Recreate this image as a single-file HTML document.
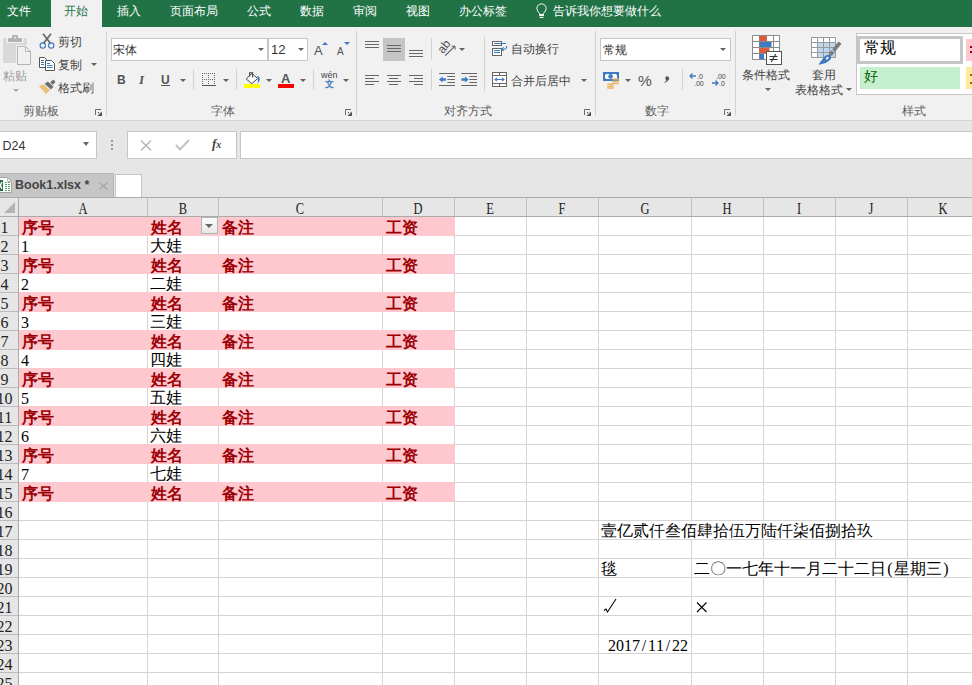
<!DOCTYPE html><html><head><meta charset="utf-8"><style>
*{box-sizing:border-box;margin:0;padding:0}
html,body{width:972px;height:685px;overflow:hidden;background:#fff;font-family:"Liberation Sans",sans-serif}
.a{position:absolute}
.t{position:absolute;white-space:nowrap;line-height:1}
.sep{position:absolute;width:1px;background:#d2d2d2}
.dd{position:absolute;width:0;height:0;border-left:3px solid transparent;border-right:3px solid transparent;border-top:3.5px solid #616161}
.rt{color:#444;font-size:12px}
.k{display:inline-block;width:1em;font-style:normal;text-align:center;font-family:"Liberation Sans",sans-serif}
.cell{position:absolute;white-space:nowrap;line-height:1;font-size:16px;font-family:"Liberation Serif",serif}
</style></head><body>
<div class="a" style="left:0;top:0;width:972px;height:27px;background:#217346"></div>
<div class="a" style="left:51px;top:0;width:51px;height:27px;background:#f1f1f1"></div>
<div class="t" style="left:7px;top:5px;font-size:12px;color:#fff"><i class="k">文</i><i class="k">件</i></div>
<div class="t" style="left:64px;top:5px;font-size:12px;color:#217346"><i class="k">开</i><i class="k">始</i></div>
<div class="t" style="left:117px;top:5px;font-size:12px;color:#fff"><i class="k">插</i><i class="k">入</i></div>
<div class="t" style="left:170px;top:5px;font-size:12px;color:#fff"><i class="k">页</i><i class="k">面</i><i class="k">布</i><i class="k">局</i></div>
<div class="t" style="left:247px;top:5px;font-size:12px;color:#fff"><i class="k">公</i><i class="k">式</i></div>
<div class="t" style="left:300px;top:5px;font-size:12px;color:#fff"><i class="k">数</i><i class="k">据</i></div>
<div class="t" style="left:353px;top:5px;font-size:12px;color:#fff"><i class="k">审</i><i class="k">阅</i></div>
<div class="t" style="left:406px;top:5px;font-size:12px;color:#fff"><i class="k">视</i><i class="k">图</i></div>
<div class="t" style="left:459px;top:5px;font-size:12px;color:#fff"><i class="k">办</i><i class="k">公</i><i class="k">标</i><i class="k">签</i></div>
<div class="t" style="left:553px;top:5px;font-size:12px;color:#fff"><i class="k">告</i><i class="k">诉</i><i class="k">我</i><i class="k">你</i><i class="k">想</i><i class="k">要</i><i class="k">做</i><i class="k">什</i><i class="k">么</i></div>
<div class="a" style="left:0;top:27px;width:972px;height:93px;background:#f1f1f1"></div>
<div class="a" style="left:0;top:120px;width:972px;height:1px;background:#d4d4d4"></div>
<div class="sep" style="left:106px;top:31px;height:85px"></div>
<div class="sep" style="left:356px;top:31px;height:85px"></div>
<div class="sep" style="left:595px;top:31px;height:85px"></div>
<div class="sep" style="left:735px;top:31px;height:85px"></div>
<div class="t rt" style="left:23px;top:105px;color:#5e5e5e"><i class="k">剪</i><i class="k">贴</i><i class="k">板</i></div>
<div class="t rt" style="left:211px;top:105px;color:#5e5e5e"><i class="k">字</i><i class="k">体</i></div>
<div class="t rt" style="left:444px;top:105px;color:#5e5e5e"><i class="k">对</i><i class="k">齐</i><i class="k">方</i><i class="k">式</i></div>
<div class="t rt" style="left:645px;top:105px;color:#5e5e5e"><i class="k">数</i><i class="k">字</i></div>
<div class="t rt" style="left:902px;top:105px;color:#5e5e5e"><i class="k">样</i><i class="k">式</i></div>
<svg class="a" style="left:95px;top:109px" width="8" height="8" viewBox="0 0 8 8"><path d="M0.5 6V0.5H6" fill="none" stroke="#6a6a6a" stroke-width="1"/><path d="M7 2.4V7H2.4Z" fill="#555"/><rect x="3" y="3" width="1.2" height="1.2" fill="#555"/></svg>
<svg class="a" style="left:345px;top:109px" width="8" height="8" viewBox="0 0 8 8"><path d="M0.5 6V0.5H6" fill="none" stroke="#6a6a6a" stroke-width="1"/><path d="M7 2.4V7H2.4Z" fill="#555"/><rect x="3" y="3" width="1.2" height="1.2" fill="#555"/></svg>
<svg class="a" style="left:584px;top:109px" width="8" height="8" viewBox="0 0 8 8"><path d="M0.5 6V0.5H6" fill="none" stroke="#6a6a6a" stroke-width="1"/><path d="M7 2.4V7H2.4Z" fill="#555"/><rect x="3" y="3" width="1.2" height="1.2" fill="#555"/></svg>
<svg class="a" style="left:724px;top:109px" width="8" height="8" viewBox="0 0 8 8"><path d="M0.5 6V0.5H6" fill="none" stroke="#6a6a6a" stroke-width="1"/><path d="M7 2.4V7H2.4Z" fill="#555"/><rect x="3" y="3" width="1.2" height="1.2" fill="#555"/></svg>
<svg class="a" style="left:0;top:30px" width="36" height="40" viewBox="0 0 36 40"><rect x="3" y="8" width="24" height="25" rx="1" fill="#d9d9d9"/><rect x="6.5" y="6.5" width="17" height="6.5" fill="#f1f1f1"/><rect x="8" y="8" width="14" height="4" rx="0.5" fill="#b3b3b3"/><rect x="12" y="5" width="6" height="4" rx="1" fill="#b3b3b3"/><circle cx="15" cy="7.6" r="1" fill="#f1f1f1"/><rect x="16" y="15" width="16" height="21" fill="#f1f1f1"/><path d="M17.5 16.5H25.5L30.5 21.5V34.5H17.5Z" fill="#f1f1f1" stroke="#b4b4b4" stroke-width="1"/><path d="M25.5 16.5V21.5H30.5" fill="none" stroke="#b4b4b4" stroke-width="1"/></svg>
<div class="t" style="left:3px;top:70px;font-size:12px;color:#9d9d9d"><i class="k">粘</i><i class="k">贴</i></div>
<div class="dd" style="left:13px;top:89px;border-top-color:#a8a8a8"></div>
<div class="t rt" style="left:58px;top:36px"><i class="k">剪</i><i class="k">切</i></div>
<div class="t rt" style="left:58px;top:59px"><i class="k">复</i><i class="k">制</i></div>
<div class="dd" style="left:91px;top:63px"></div>
<div class="t rt" style="left:58px;top:82px"><i class="k">格</i><i class="k">式</i><i class="k">刷</i></div>
<div class="a" style="left:111px;top:38px;width:157px;height:23px;background:#fff;border:1px solid #c6c6c6"></div>
<div class="t" style="left:113px;top:44px;font-size:12px;color:#333"><i class="k">宋</i><i class="k">体</i></div>
<div class="dd" style="left:258px;top:48px"></div>
<div class="a" style="left:268px;top:38px;width:40px;height:23px;background:#fff;border:1px solid #c6c6c6"></div>
<div class="t" style="left:271px;top:43px;font-size:13px;color:#333">12</div>
<div class="dd" style="left:298px;top:48px"></div>
<div class="t" style="left:314px;top:44px;font-size:13px;color:#505050">A</div>
<div class="a" style="left:322px;top:42px;width:0;height:0;border-left:3px solid transparent;border-right:3px solid transparent;border-bottom:3px solid #3d7ac2"></div>
<div class="t" style="left:337px;top:47px;font-size:10px;color:#505050">A</div>
<div class="a" style="left:344px;top:42px;width:0;height:0;border-left:3px solid transparent;border-right:3px solid transparent;border-top:3px solid #3d7ac2"></div>
<div class="t" style="left:117px;top:74px;font-size:12px;font-weight:bold;color:#555">B</div>
<div class="t" style="left:139px;top:73px;font-size:13px;font-style:italic;font-weight:bold;color:#555;font-family:'Liberation Serif',serif">I</div>
<div class="t" style="left:161px;top:74px;font-size:12px;font-weight:bold;color:#555">U</div><div class="a" style="left:161px;top:85px;width:9px;height:1px;background:#555"></div>
<div class="dd" style="left:180px;top:79px"></div>
<div class="sep" style="left:193px;top:69px;height:21px"></div>
<div class="dd" style="left:223px;top:79px"></div>
<div class="sep" style="left:236px;top:69px;height:21px"></div>
<div class="dd" style="left:266px;top:79px"></div>
<div class="t" style="left:281px;top:72px;font-size:13px;font-weight:bold;color:#555">A</div>
<div class="a" style="left:278px;top:84px;width:16px;height:4px;background:#ff0000"></div>
<div class="dd" style="left:300px;top:79px"></div>
<div class="sep" style="left:313px;top:69px;height:21px"></div>
<div class="t" style="left:321px;top:71px;font-size:9px;color:#444">wén</div>
<div class="t" style="left:325px;top:80px;font-size:9px;font-weight:bold;color:#3d7ac2"><i class="k">文</i></div>
<div class="dd" style="left:343px;top:79px"></div>
<div class="a" style="left:383px;top:38px;width:22px;height:23px;background:#c5c5c5"></div>
<div class="a" style="left:365px;top:41px;width:14px;height:1px;background:#666"></div><div class="a" style="left:365px;top:44px;width:14px;height:1px;background:#666"></div><div class="a" style="left:365px;top:47px;width:14px;height:1px;background:#666"></div>
<div class="a" style="left:387px;top:45px;width:14px;height:1px;background:#666"></div><div class="a" style="left:387px;top:48px;width:14px;height:1px;background:#666"></div><div class="a" style="left:387px;top:51px;width:14px;height:1px;background:#666"></div>
<div class="a" style="left:409px;top:50px;width:14px;height:1px;background:#666"></div><div class="a" style="left:409px;top:53px;width:14px;height:1px;background:#666"></div><div class="a" style="left:409px;top:56px;width:14px;height:1px;background:#666"></div>
<div class="sep" style="left:431px;top:38px;height:22px"></div>
<div class="dd" style="left:459px;top:48px"></div>
<div class="a" style="left:365px;top:75px;width:14px;height:1px;background:#666"></div><div class="a" style="left:365px;top:78px;width:9px;height:1px;background:#666"></div><div class="a" style="left:365px;top:81px;width:14px;height:1px;background:#666"></div><div class="a" style="left:365px;top:84px;width:9px;height:1px;background:#666"></div>
<div class="a" style="left:387px;top:75px;width:14px;height:1px;background:#666"></div><div class="a" style="left:389px;top:78px;width:9px;height:1px;background:#666"></div><div class="a" style="left:387px;top:81px;width:14px;height:1px;background:#666"></div><div class="a" style="left:389px;top:84px;width:9px;height:1px;background:#666"></div>
<div class="a" style="left:409px;top:75px;width:14px;height:1px;background:#666"></div><div class="a" style="left:414px;top:78px;width:9px;height:1px;background:#666"></div><div class="a" style="left:409px;top:81px;width:14px;height:1px;background:#666"></div><div class="a" style="left:414px;top:84px;width:9px;height:1px;background:#666"></div>
<div class="sep" style="left:431px;top:69px;height:21px"></div>
<div class="sep" style="left:484px;top:37px;height:54px"></div>
<div class="t rt" style="left:511px;top:43px"><i class="k">自</i><i class="k">动</i><i class="k">换</i><i class="k">行</i></div>
<div class="t rt" style="left:511px;top:75px"><i class="k">合</i><i class="k">并</i><i class="k">后</i><i class="k">居</i><i class="k">中</i></div>
<div class="dd" style="left:581px;top:79px"></div>
<div class="a" style="left:600px;top:38px;width:131px;height:23px;background:#fff;border:1px solid #c6c6c6"></div>
<div class="t" style="left:603px;top:44px;font-size:12px;color:#333"><i class="k">常</i><i class="k">规</i></div>
<div class="dd" style="left:720px;top:48px"></div>
<div class="dd" style="left:625px;top:79px"></div>
<div class="t" style="left:638px;top:73px;font-size:15.5px;color:#555">%</div>
<div class="sep" style="left:682px;top:69px;height:21px"></div>
<svg class="a" style="left:689px;top:72px" width="16" height="15" viewBox="0 0 16 15"><path d="M1 4h6M3.5 1.5L1 4l2.5 2.5" stroke="#3d7ac2" stroke-width="1.3" fill="none"/><text x="8" y="7" font-size="7" fill="#444" font-family="Liberation Sans">.0</text><text x="5" y="14" font-size="7" fill="#444" font-family="Liberation Sans">.00</text></svg>
<svg class="a" style="left:711px;top:72px" width="16" height="15" viewBox="0 0 16 15"><text x="5" y="7" font-size="7" fill="#444" font-family="Liberation Sans">.00</text><path d="M1 11h6M4.5 8.5L7 11l-2.5 2.5" stroke="#3d7ac2" stroke-width="1.3" fill="none"/><text x="8" y="14" font-size="7" fill="#444" font-family="Liberation Sans">.0</text></svg>
<div class="t rt" style="left:742px;top:69px"><i class="k">条</i><i class="k">件</i><i class="k">格</i><i class="k">式</i></div>
<div class="dd" style="left:765px;top:88px"></div>
<div class="t rt" style="left:812px;top:69px"><i class="k">套</i><i class="k">用</i></div>
<div class="t rt" style="left:795px;top:84px"><i class="k">表</i><i class="k">格</i><i class="k">格</i><i class="k">式</i></div>
<div class="dd" style="left:846px;top:88px"></div>
<div class="a" style="left:856px;top:33px;width:120px;height:62px;background:#fff;border:1px solid #c6c6c6"></div>
<div class="a" style="left:857px;top:36px;width:106px;height:28px;background:#fff;border:3px solid #c6c6c6"></div>
<div class="t" style="left:864px;top:40px;font-size:16px;color:#000"><i class="k">常</i><i class="k">规</i></div>
<div class="a" style="left:966px;top:39px;width:10px;height:22px;background:#ffc7ce"></div>
<div class="a" style="left:860px;top:67px;width:100px;height:22px;background:#c6efce"></div>
<div class="t" style="left:864px;top:69px;font-size:14px;color:#006100"><i class="k">好</i></div>
<div class="a" style="left:966px;top:67px;width:10px;height:22px;background:#ffeb9c"></div>
<div class="a" style="left:970px;top:46px;width:2px;height:2px;background:#9c0006"></div><div class="a" style="left:970px;top:51px;width:2px;height:2px;background:#9c0006"></div>
<div class="a" style="left:970px;top:74px;width:2px;height:2px;background:#9c6500"></div><div class="a" style="left:970px;top:82px;width:2px;height:2px;background:#9c6500"></div>
<div class="a" style="left:0;top:121px;width:972px;height:49px;background:#e6e6e6"></div>
<div class="a" style="left:-2px;top:131px;width:99px;height:28px;background:#fff;border:1px solid #c6c6c6"></div>
<div class="t" style="left:2.5px;top:140px;font-size:12.5px;color:#333">D24</div>
<div class="a" style="left:83px;top:142px;width:0;height:0;border-left:3.5px solid transparent;border-right:3.5px solid transparent;border-top:4px solid #666"></div>
<div class="a" style="left:111px;top:140px;width:2px;height:2px;background:#999"></div>
<div class="a" style="left:111px;top:144px;width:2px;height:2px;background:#999"></div>
<div class="a" style="left:111px;top:148px;width:2px;height:2px;background:#999"></div>
<div class="a" style="left:127px;top:131px;width:110px;height:28px;background:#fff;border:1px solid #c6c6c6"></div>
<svg class="a" style="left:140px;top:140px" width="12" height="11" viewBox="0 0 12 11"><path d="M1 0.5L11 10.5M11 0.5L1 10.5" stroke="#b3b3b3" stroke-width="1.3"/></svg>
<svg class="a" style="left:175px;top:139px" width="15" height="12" viewBox="0 0 15 12"><path d="M1 6l4 4.5L14 1" stroke="#c2c2c2" stroke-width="2" fill="none"/></svg>
<div class="t" style="left:212px;top:137px;font-size:13px;color:#444;font-style:italic;font-weight:bold;font-family:'Liberation Serif',serif">f<span style="font-size:10px">x</span></div>
<div class="a" style="left:240px;top:131px;width:740px;height:28px;background:#fff;border:1px solid #c6c6c6"></div>
<div class="a" style="left:0;top:170px;width:972px;height:27px;background:#e6e6e6"></div>
<div class="a" style="left:-2px;top:173px;width:116px;height:24px;background:#c6c6c6;border:1px solid #b4b4b4;border-bottom:none"></div>
<div class="t" style="left:15px;top:179px;font-size:12.5px;font-weight:bold;color:#444">Book1.xlsx *</div>
<svg class="a" style="left:99px;top:182px" width="9" height="8" viewBox="0 0 9 8"><path d="M0.5 0.5L8.5 7.5M8.5 0.5L0.5 7.5" stroke="#a8a8a8" stroke-width="1.4"/></svg>
<div class="a" style="left:115px;top:174px;width:27px;height:23px;background:#fff;border:1px solid #c6c6c6;border-bottom:none"></div>
<div class="a" style="left:0;top:197px;width:972px;height:1px;background:#ababab"></div>
<div class="a" style="left:0;top:198px;width:972px;height:18px;background:#e6e6e6"></div>
<div class="a" style="left:0;top:216px;width:18px;height:469px;background:#e6e6e6"></div>
<svg class="a" style="left:4px;top:202px" width="12" height="12" viewBox="0 0 12 12"><path d="M11 0V11H0z" fill="#b4b4b4"/></svg>
<div class="a" style="left:18px;top:216px;width:437px;height:20px;background:#ffc7ce"></div>
<div class="a" style="left:18px;top:254px;width:437px;height:20px;background:#ffc7ce"></div>
<div class="a" style="left:18px;top:292px;width:437px;height:20px;background:#ffc7ce"></div>
<div class="a" style="left:18px;top:330px;width:437px;height:20px;background:#ffc7ce"></div>
<div class="a" style="left:18px;top:368px;width:437px;height:20px;background:#ffc7ce"></div>
<div class="a" style="left:18px;top:406px;width:437px;height:20px;background:#ffc7ce"></div>
<div class="a" style="left:18px;top:444px;width:437px;height:20px;background:#ffc7ce"></div>
<div class="a" style="left:18px;top:482px;width:437px;height:20px;background:#ffc7ce"></div>
<div class="a" style="left:0;top:235px;width:18px;height:1px;background:#bcbcbc"></div>
<div class="a" style="left:455px;top:235px;width:517px;height:1px;background:#d4d4d4"></div>
<div class="a" style="left:0;top:254px;width:18px;height:1px;background:#bcbcbc"></div>
<div class="a" style="left:455px;top:254px;width:517px;height:1px;background:#d4d4d4"></div>
<div class="a" style="left:0;top:273px;width:18px;height:1px;background:#bcbcbc"></div>
<div class="a" style="left:455px;top:273px;width:517px;height:1px;background:#d4d4d4"></div>
<div class="a" style="left:0;top:292px;width:18px;height:1px;background:#bcbcbc"></div>
<div class="a" style="left:455px;top:292px;width:517px;height:1px;background:#d4d4d4"></div>
<div class="a" style="left:0;top:311px;width:18px;height:1px;background:#bcbcbc"></div>
<div class="a" style="left:455px;top:311px;width:517px;height:1px;background:#d4d4d4"></div>
<div class="a" style="left:0;top:330px;width:18px;height:1px;background:#bcbcbc"></div>
<div class="a" style="left:455px;top:330px;width:517px;height:1px;background:#d4d4d4"></div>
<div class="a" style="left:0;top:349px;width:18px;height:1px;background:#bcbcbc"></div>
<div class="a" style="left:455px;top:349px;width:517px;height:1px;background:#d4d4d4"></div>
<div class="a" style="left:0;top:368px;width:18px;height:1px;background:#bcbcbc"></div>
<div class="a" style="left:455px;top:368px;width:517px;height:1px;background:#d4d4d4"></div>
<div class="a" style="left:0;top:387px;width:18px;height:1px;background:#bcbcbc"></div>
<div class="a" style="left:455px;top:387px;width:517px;height:1px;background:#d4d4d4"></div>
<div class="a" style="left:0;top:406px;width:18px;height:1px;background:#bcbcbc"></div>
<div class="a" style="left:455px;top:406px;width:517px;height:1px;background:#d4d4d4"></div>
<div class="a" style="left:0;top:425px;width:18px;height:1px;background:#bcbcbc"></div>
<div class="a" style="left:455px;top:425px;width:517px;height:1px;background:#d4d4d4"></div>
<div class="a" style="left:0;top:444px;width:18px;height:1px;background:#bcbcbc"></div>
<div class="a" style="left:455px;top:444px;width:517px;height:1px;background:#d4d4d4"></div>
<div class="a" style="left:0;top:463px;width:18px;height:1px;background:#bcbcbc"></div>
<div class="a" style="left:455px;top:463px;width:517px;height:1px;background:#d4d4d4"></div>
<div class="a" style="left:0;top:482px;width:18px;height:1px;background:#bcbcbc"></div>
<div class="a" style="left:455px;top:482px;width:517px;height:1px;background:#d4d4d4"></div>
<div class="a" style="left:0;top:501px;width:18px;height:1px;background:#bcbcbc"></div>
<div class="a" style="left:455px;top:501px;width:517px;height:1px;background:#d4d4d4"></div>
<div class="a" style="left:0;top:520px;width:18px;height:1px;background:#bcbcbc"></div>
<div class="a" style="left:18px;top:520px;width:954px;height:1px;background:#d4d4d4"></div>
<div class="a" style="left:0;top:539px;width:18px;height:1px;background:#bcbcbc"></div>
<div class="a" style="left:18px;top:539px;width:954px;height:1px;background:#d4d4d4"></div>
<div class="a" style="left:0;top:558px;width:18px;height:1px;background:#bcbcbc"></div>
<div class="a" style="left:18px;top:558px;width:954px;height:1px;background:#d4d4d4"></div>
<div class="a" style="left:0;top:577px;width:18px;height:1px;background:#bcbcbc"></div>
<div class="a" style="left:18px;top:577px;width:954px;height:1px;background:#d4d4d4"></div>
<div class="a" style="left:0;top:596px;width:18px;height:1px;background:#bcbcbc"></div>
<div class="a" style="left:18px;top:596px;width:954px;height:1px;background:#d4d4d4"></div>
<div class="a" style="left:0;top:615px;width:18px;height:1px;background:#bcbcbc"></div>
<div class="a" style="left:18px;top:615px;width:954px;height:1px;background:#d4d4d4"></div>
<div class="a" style="left:0;top:634px;width:18px;height:1px;background:#bcbcbc"></div>
<div class="a" style="left:18px;top:634px;width:954px;height:1px;background:#d4d4d4"></div>
<div class="a" style="left:0;top:653px;width:18px;height:1px;background:#bcbcbc"></div>
<div class="a" style="left:18px;top:653px;width:954px;height:1px;background:#d4d4d4"></div>
<div class="a" style="left:0;top:672px;width:18px;height:1px;background:#bcbcbc"></div>
<div class="a" style="left:18px;top:672px;width:954px;height:1px;background:#d4d4d4"></div>
<div class="a" style="left:0;top:691px;width:18px;height:1px;background:#bcbcbc"></div>
<div class="a" style="left:18px;top:691px;width:954px;height:1px;background:#d4d4d4"></div>
<div class="a" style="left:147px;top:236px;width:1px;height:18px;background:#d4d4d4"></div>
<div class="a" style="left:147px;top:274px;width:1px;height:18px;background:#d4d4d4"></div>
<div class="a" style="left:147px;top:312px;width:1px;height:18px;background:#d4d4d4"></div>
<div class="a" style="left:147px;top:350px;width:1px;height:18px;background:#d4d4d4"></div>
<div class="a" style="left:147px;top:388px;width:1px;height:18px;background:#d4d4d4"></div>
<div class="a" style="left:147px;top:426px;width:1px;height:18px;background:#d4d4d4"></div>
<div class="a" style="left:147px;top:464px;width:1px;height:18px;background:#d4d4d4"></div>
<div class="a" style="left:147px;top:502px;width:1px;height:189px;background:#d4d4d4"></div>
<div class="a" style="left:218px;top:236px;width:1px;height:18px;background:#d4d4d4"></div>
<div class="a" style="left:218px;top:274px;width:1px;height:18px;background:#d4d4d4"></div>
<div class="a" style="left:218px;top:312px;width:1px;height:18px;background:#d4d4d4"></div>
<div class="a" style="left:218px;top:350px;width:1px;height:18px;background:#d4d4d4"></div>
<div class="a" style="left:218px;top:388px;width:1px;height:18px;background:#d4d4d4"></div>
<div class="a" style="left:218px;top:426px;width:1px;height:18px;background:#d4d4d4"></div>
<div class="a" style="left:218px;top:464px;width:1px;height:18px;background:#d4d4d4"></div>
<div class="a" style="left:218px;top:502px;width:1px;height:189px;background:#d4d4d4"></div>
<div class="a" style="left:382px;top:236px;width:1px;height:18px;background:#d4d4d4"></div>
<div class="a" style="left:382px;top:274px;width:1px;height:18px;background:#d4d4d4"></div>
<div class="a" style="left:382px;top:312px;width:1px;height:18px;background:#d4d4d4"></div>
<div class="a" style="left:382px;top:350px;width:1px;height:18px;background:#d4d4d4"></div>
<div class="a" style="left:382px;top:388px;width:1px;height:18px;background:#d4d4d4"></div>
<div class="a" style="left:382px;top:426px;width:1px;height:18px;background:#d4d4d4"></div>
<div class="a" style="left:382px;top:464px;width:1px;height:18px;background:#d4d4d4"></div>
<div class="a" style="left:382px;top:502px;width:1px;height:189px;background:#d4d4d4"></div>
<div class="a" style="left:454px;top:236px;width:1px;height:18px;background:#d4d4d4"></div>
<div class="a" style="left:454px;top:274px;width:1px;height:18px;background:#d4d4d4"></div>
<div class="a" style="left:454px;top:312px;width:1px;height:18px;background:#d4d4d4"></div>
<div class="a" style="left:454px;top:350px;width:1px;height:18px;background:#d4d4d4"></div>
<div class="a" style="left:454px;top:388px;width:1px;height:18px;background:#d4d4d4"></div>
<div class="a" style="left:454px;top:426px;width:1px;height:18px;background:#d4d4d4"></div>
<div class="a" style="left:454px;top:464px;width:1px;height:18px;background:#d4d4d4"></div>
<div class="a" style="left:454px;top:502px;width:1px;height:189px;background:#d4d4d4"></div>
<div class="a" style="left:526px;top:217px;width:1px;height:474px;background:#d4d4d4"></div>
<div class="a" style="left:598px;top:217px;width:1px;height:474px;background:#d4d4d4"></div>
<div class="a" style="left:691px;top:217px;width:1px;height:303px;background:#d4d4d4"></div>
<div class="a" style="left:691px;top:540px;width:1px;height:151px;background:#d4d4d4"></div>
<div class="a" style="left:763px;top:217px;width:1px;height:303px;background:#d4d4d4"></div>
<div class="a" style="left:763px;top:540px;width:1px;height:18px;background:#d4d4d4"></div>
<div class="a" style="left:763px;top:578px;width:1px;height:113px;background:#d4d4d4"></div>
<div class="a" style="left:835px;top:217px;width:1px;height:303px;background:#d4d4d4"></div>
<div class="a" style="left:835px;top:540px;width:1px;height:18px;background:#d4d4d4"></div>
<div class="a" style="left:835px;top:578px;width:1px;height:113px;background:#d4d4d4"></div>
<div class="a" style="left:907px;top:217px;width:1px;height:341px;background:#d4d4d4"></div>
<div class="a" style="left:907px;top:578px;width:1px;height:113px;background:#d4d4d4"></div>
<div class="a" style="left:147px;top:198px;width:1px;height:18px;background:#c0c0c0"></div>
<div class="a" style="left:218px;top:198px;width:1px;height:18px;background:#c0c0c0"></div>
<div class="a" style="left:382px;top:198px;width:1px;height:18px;background:#c0c0c0"></div>
<div class="a" style="left:454px;top:198px;width:1px;height:18px;background:#c0c0c0"></div>
<div class="a" style="left:526px;top:198px;width:1px;height:18px;background:#c0c0c0"></div>
<div class="a" style="left:598px;top:198px;width:1px;height:18px;background:#c0c0c0"></div>
<div class="a" style="left:691px;top:198px;width:1px;height:18px;background:#c0c0c0"></div>
<div class="a" style="left:763px;top:198px;width:1px;height:18px;background:#c0c0c0"></div>
<div class="a" style="left:835px;top:198px;width:1px;height:18px;background:#c0c0c0"></div>
<div class="a" style="left:907px;top:198px;width:1px;height:18px;background:#c0c0c0"></div>
<div class="a" style="left:0;top:216px;width:972px;height:1px;background:#ababab"></div>
<div class="a" style="left:18px;top:198px;width:1px;height:488px;background:#ababab"></div>
<div class="t" style="left:74.5px;width:16px;text-align:center;top:201px;font-size:16px;color:#222;transform:scaleX(0.78);font-family:'Liberation Serif',serif">A</div>
<div class="t" style="left:174.5px;width:16px;text-align:center;top:201px;font-size:16px;color:#222;transform:scaleX(0.78);font-family:'Liberation Serif',serif">B</div>
<div class="t" style="left:292.0px;width:16px;text-align:center;top:201px;font-size:16px;color:#222;transform:scaleX(0.78);font-family:'Liberation Serif',serif">C</div>
<div class="t" style="left:410.0px;width:16px;text-align:center;top:201px;font-size:16px;color:#222;transform:scaleX(0.78);font-family:'Liberation Serif',serif">D</div>
<div class="t" style="left:482.0px;width:16px;text-align:center;top:201px;font-size:16px;color:#222;transform:scaleX(0.78);font-family:'Liberation Serif',serif">E</div>
<div class="t" style="left:554.0px;width:16px;text-align:center;top:201px;font-size:16px;color:#222;transform:scaleX(0.78);font-family:'Liberation Serif',serif">F</div>
<div class="t" style="left:636.5px;width:16px;text-align:center;top:201px;font-size:16px;color:#222;transform:scaleX(0.78);font-family:'Liberation Serif',serif">G</div>
<div class="t" style="left:719.0px;width:16px;text-align:center;top:201px;font-size:16px;color:#222;transform:scaleX(0.78);font-family:'Liberation Serif',serif">H</div>
<div class="t" style="left:791.0px;width:16px;text-align:center;top:201px;font-size:16px;color:#222;transform:scaleX(0.78);font-family:'Liberation Serif',serif">I</div>
<div class="t" style="left:863.0px;width:16px;text-align:center;top:201px;font-size:16px;color:#222;transform:scaleX(0.78);font-family:'Liberation Serif',serif">J</div>
<div class="t" style="left:935.0px;width:16px;text-align:center;top:201px;font-size:16px;color:#222;transform:scaleX(0.78);font-family:'Liberation Serif',serif">K</div>
<div class="t" style="left:-11px;width:31px;text-align:center;top:220px;font-size:16px;color:#222;font-family:'Liberation Serif',serif">1</div>
<div class="t" style="left:-11px;width:31px;text-align:center;top:239px;font-size:16px;color:#222;font-family:'Liberation Serif',serif">2</div>
<div class="t" style="left:-11px;width:31px;text-align:center;top:258px;font-size:16px;color:#222;font-family:'Liberation Serif',serif">3</div>
<div class="t" style="left:-11px;width:31px;text-align:center;top:277px;font-size:16px;color:#222;font-family:'Liberation Serif',serif">4</div>
<div class="t" style="left:-11px;width:31px;text-align:center;top:296px;font-size:16px;color:#222;font-family:'Liberation Serif',serif">5</div>
<div class="t" style="left:-11px;width:31px;text-align:center;top:315px;font-size:16px;color:#222;font-family:'Liberation Serif',serif">6</div>
<div class="t" style="left:-11px;width:31px;text-align:center;top:334px;font-size:16px;color:#222;font-family:'Liberation Serif',serif">7</div>
<div class="t" style="left:-11px;width:31px;text-align:center;top:353px;font-size:16px;color:#222;font-family:'Liberation Serif',serif">8</div>
<div class="t" style="left:-11px;width:31px;text-align:center;top:372px;font-size:16px;color:#222;font-family:'Liberation Serif',serif">9</div>
<div class="t" style="left:-11px;width:31px;text-align:center;top:391px;font-size:16px;color:#222;font-family:'Liberation Serif',serif">10</div>
<div class="t" style="left:-11px;width:31px;text-align:center;top:410px;font-size:16px;color:#222;font-family:'Liberation Serif',serif">11</div>
<div class="t" style="left:-11px;width:31px;text-align:center;top:429px;font-size:16px;color:#222;font-family:'Liberation Serif',serif">12</div>
<div class="t" style="left:-11px;width:31px;text-align:center;top:448px;font-size:16px;color:#222;font-family:'Liberation Serif',serif">13</div>
<div class="t" style="left:-11px;width:31px;text-align:center;top:467px;font-size:16px;color:#222;font-family:'Liberation Serif',serif">14</div>
<div class="t" style="left:-11px;width:31px;text-align:center;top:486px;font-size:16px;color:#222;font-family:'Liberation Serif',serif">15</div>
<div class="t" style="left:-11px;width:31px;text-align:center;top:505px;font-size:16px;color:#222;font-family:'Liberation Serif',serif">16</div>
<div class="t" style="left:-11px;width:31px;text-align:center;top:524px;font-size:16px;color:#222;font-family:'Liberation Serif',serif">17</div>
<div class="t" style="left:-11px;width:31px;text-align:center;top:543px;font-size:16px;color:#222;font-family:'Liberation Serif',serif">18</div>
<div class="t" style="left:-11px;width:31px;text-align:center;top:562px;font-size:16px;color:#222;font-family:'Liberation Serif',serif">19</div>
<div class="t" style="left:-11px;width:31px;text-align:center;top:581px;font-size:16px;color:#222;font-family:'Liberation Serif',serif">20</div>
<div class="t" style="left:-11px;width:31px;text-align:center;top:600px;font-size:16px;color:#222;font-family:'Liberation Serif',serif">21</div>
<div class="t" style="left:-11px;width:31px;text-align:center;top:619px;font-size:16px;color:#222;font-family:'Liberation Serif',serif">22</div>
<div class="t" style="left:-11px;width:31px;text-align:center;top:638px;font-size:16px;color:#222;font-family:'Liberation Serif',serif">23</div>
<div class="t" style="left:-11px;width:31px;text-align:center;top:657px;font-size:16px;color:#222;font-family:'Liberation Serif',serif">24</div>
<div class="t" style="left:-11px;width:31px;text-align:center;top:676px;font-size:16px;color:#222;font-family:'Liberation Serif',serif">25</div>
<div class="cell" style="left:22px;top:220px;color:#9c0006;font-weight:bold"><i class="k">序</i><i class="k">号</i></div>
<div class="cell" style="left:151px;top:220px;color:#9c0006;font-weight:bold"><i class="k">姓</i><i class="k">名</i></div>
<div class="cell" style="left:222px;top:220px;color:#9c0006;font-weight:bold"><i class="k">备</i><i class="k">注</i></div>
<div class="cell" style="left:386px;top:220px;color:#9c0006;font-weight:bold"><i class="k">工</i><i class="k">资</i></div>
<div class="cell" style="left:22px;top:258px;color:#9c0006;font-weight:bold"><i class="k">序</i><i class="k">号</i></div>
<div class="cell" style="left:151px;top:258px;color:#9c0006;font-weight:bold"><i class="k">姓</i><i class="k">名</i></div>
<div class="cell" style="left:222px;top:258px;color:#9c0006;font-weight:bold"><i class="k">备</i><i class="k">注</i></div>
<div class="cell" style="left:386px;top:258px;color:#9c0006;font-weight:bold"><i class="k">工</i><i class="k">资</i></div>
<div class="cell" style="left:22px;top:296px;color:#9c0006;font-weight:bold"><i class="k">序</i><i class="k">号</i></div>
<div class="cell" style="left:151px;top:296px;color:#9c0006;font-weight:bold"><i class="k">姓</i><i class="k">名</i></div>
<div class="cell" style="left:222px;top:296px;color:#9c0006;font-weight:bold"><i class="k">备</i><i class="k">注</i></div>
<div class="cell" style="left:386px;top:296px;color:#9c0006;font-weight:bold"><i class="k">工</i><i class="k">资</i></div>
<div class="cell" style="left:22px;top:334px;color:#9c0006;font-weight:bold"><i class="k">序</i><i class="k">号</i></div>
<div class="cell" style="left:151px;top:334px;color:#9c0006;font-weight:bold"><i class="k">姓</i><i class="k">名</i></div>
<div class="cell" style="left:222px;top:334px;color:#9c0006;font-weight:bold"><i class="k">备</i><i class="k">注</i></div>
<div class="cell" style="left:386px;top:334px;color:#9c0006;font-weight:bold"><i class="k">工</i><i class="k">资</i></div>
<div class="cell" style="left:22px;top:372px;color:#9c0006;font-weight:bold"><i class="k">序</i><i class="k">号</i></div>
<div class="cell" style="left:151px;top:372px;color:#9c0006;font-weight:bold"><i class="k">姓</i><i class="k">名</i></div>
<div class="cell" style="left:222px;top:372px;color:#9c0006;font-weight:bold"><i class="k">备</i><i class="k">注</i></div>
<div class="cell" style="left:386px;top:372px;color:#9c0006;font-weight:bold"><i class="k">工</i><i class="k">资</i></div>
<div class="cell" style="left:22px;top:410px;color:#9c0006;font-weight:bold"><i class="k">序</i><i class="k">号</i></div>
<div class="cell" style="left:151px;top:410px;color:#9c0006;font-weight:bold"><i class="k">姓</i><i class="k">名</i></div>
<div class="cell" style="left:222px;top:410px;color:#9c0006;font-weight:bold"><i class="k">备</i><i class="k">注</i></div>
<div class="cell" style="left:386px;top:410px;color:#9c0006;font-weight:bold"><i class="k">工</i><i class="k">资</i></div>
<div class="cell" style="left:22px;top:448px;color:#9c0006;font-weight:bold"><i class="k">序</i><i class="k">号</i></div>
<div class="cell" style="left:151px;top:448px;color:#9c0006;font-weight:bold"><i class="k">姓</i><i class="k">名</i></div>
<div class="cell" style="left:222px;top:448px;color:#9c0006;font-weight:bold"><i class="k">备</i><i class="k">注</i></div>
<div class="cell" style="left:386px;top:448px;color:#9c0006;font-weight:bold"><i class="k">工</i><i class="k">资</i></div>
<div class="cell" style="left:22px;top:486px;color:#9c0006;font-weight:bold"><i class="k">序</i><i class="k">号</i></div>
<div class="cell" style="left:151px;top:486px;color:#9c0006;font-weight:bold"><i class="k">姓</i><i class="k">名</i></div>
<div class="cell" style="left:222px;top:486px;color:#9c0006;font-weight:bold"><i class="k">备</i><i class="k">注</i></div>
<div class="cell" style="left:386px;top:486px;color:#9c0006;font-weight:bold"><i class="k">工</i><i class="k">资</i></div>
<div class="cell" style="left:21px;top:239px;color:#000">1</div>
<div class="cell" style="left:150px;top:238px;color:#000"><i class="k">大</i><i class="k">娃</i></div>
<div class="cell" style="left:21px;top:277px;color:#000">2</div>
<div class="cell" style="left:150px;top:276px;color:#000"><i class="k">二</i><i class="k">娃</i></div>
<div class="cell" style="left:21px;top:315px;color:#000">3</div>
<div class="cell" style="left:150px;top:314px;color:#000"><i class="k">三</i><i class="k">娃</i></div>
<div class="cell" style="left:21px;top:353px;color:#000">4</div>
<div class="cell" style="left:150px;top:352px;color:#000"><i class="k">四</i><i class="k">娃</i></div>
<div class="cell" style="left:21px;top:391px;color:#000">5</div>
<div class="cell" style="left:150px;top:390px;color:#000"><i class="k">五</i><i class="k">娃</i></div>
<div class="cell" style="left:21px;top:429px;color:#000">6</div>
<div class="cell" style="left:150px;top:428px;color:#000"><i class="k">六</i><i class="k">娃</i></div>
<div class="cell" style="left:21px;top:467px;color:#000">7</div>
<div class="cell" style="left:150px;top:466px;color:#000"><i class="k">七</i><i class="k">娃</i></div>
<div class="a" style="left:201px;top:217px;width:17px;height:17px;background:linear-gradient(#fafafa,#e8e8e8);border:1px solid #aeb4bb"></div>
<div class="a" style="left:205px;top:224px;width:0;height:0;border-left:4px solid transparent;border-right:4px solid transparent;border-top:4px solid #666"></div>
<div class="cell" style="left:601px;top:523px;color:#000"><i class="k">壹</i><i class="k">亿</i><i class="k">贰</i><i class="k">仟</i><i class="k">叁</i><i class="k">佰</i><i class="k">肆</i><i class="k">拾</i><i class="k">伍</i><i class="k">万</i><i class="k">陆</i><i class="k">仟</i><i class="k">柒</i><i class="k">佰</i><i class="k">捌</i><i class="k">拾</i><i class="k">玖</i></div>
<div class="cell" style="left:601px;top:561px;color:#000"><i class="k">毯</i></div>
<div class="cell" style="left:694px;top:561px;color:#000"><i class="k">二</i><i class="k">〇</i><i class="k">一</i><i class="k">七</i><i class="k">年</i><i class="k">十</i><i class="k">一</i><i class="k">月</i><i class="k">二</i><i class="k">十</i><i class="k">二</i><i class="k">日</i><span style="display:inline-block;width:8px;text-align:center">(</span><i class="k">星</i><i class="k">期</i><i class="k">三</i><span style="display:inline-block;width:8px;text-align:center">)</span></div>
<svg class="a" style="left:603px;top:598px" width="15" height="16" viewBox="0 0 15 16"><path d="M1 12.5l2-1.5 1.5 3L13 1" stroke="#000" stroke-width="1.1" fill="none"/></svg>
<svg class="a" style="left:696px;top:601px" width="12" height="12" viewBox="0 0 12 12"><path d="M1 1.5l9.5 9.5M10.5 1.5L1 11" stroke="#000" stroke-width="1.1" fill="none"/></svg>
<div class="cell" style="left:608px;top:638px;color:#000"><span style="display:inline-block;width:8px;text-align:center">2</span><span style="display:inline-block;width:8px;text-align:center">0</span><span style="display:inline-block;width:8px;text-align:center">1</span><span style="display:inline-block;width:8px;text-align:center">7</span><span style="display:inline-block;width:8px;text-align:center">/</span><span style="display:inline-block;width:8px;text-align:center">1</span><span style="display:inline-block;width:8px;text-align:center">1</span><span style="display:inline-block;width:8px;text-align:center">/</span><span style="display:inline-block;width:8px;text-align:center">2</span><span style="display:inline-block;width:8px;text-align:center">2</span></div>
<svg class="a" style="left:0;top:0" width="972" height="685" viewBox="0 0 972 685"><path d="M539.6 13.4C538 11.8 536.9 10.2 536.9 8.2C536.9 5.6 539 3.9 541.5 3.9C544 3.9 546.1 5.6 546.1 8.2C546.1 10.2 545 11.8 543.4 13.4V14.6H539.6Z" fill="none" stroke="#fff" stroke-width="1"/><rect x="539.1" y="14.6" width="4.8" height="1.5" fill="#fff"/><rect x="539.6" y="17" width="3.8" height="1" fill="#fff"/><g fill="#666"><rect x="202" y="73" width="1" height="1"/><rect x="204" y="73" width="1" height="1"/><rect x="206" y="73" width="1" height="1"/><rect x="208" y="73" width="1" height="1"/><rect x="210" y="73" width="1" height="1"/><rect x="212" y="73" width="1" height="1"/><rect x="214" y="73" width="1" height="1"/><rect x="202" y="79" width="1" height="1"/><rect x="204" y="79" width="1" height="1"/><rect x="206" y="79" width="1" height="1"/><rect x="208" y="79" width="1" height="1"/><rect x="210" y="79" width="1" height="1"/><rect x="212" y="79" width="1" height="1"/><rect x="214" y="79" width="1" height="1"/><rect x="202" y="75" width="1" height="1"/><rect x="202" y="77" width="1" height="1"/><rect x="202" y="79" width="1" height="1"/><rect x="202" y="81" width="1" height="1"/><rect x="202" y="83" width="1" height="1"/><rect x="208" y="75" width="1" height="1"/><rect x="208" y="77" width="1" height="1"/><rect x="208" y="79" width="1" height="1"/><rect x="208" y="81" width="1" height="1"/><rect x="208" y="83" width="1" height="1"/><rect x="214" y="75" width="1" height="1"/><rect x="214" y="77" width="1" height="1"/><rect x="214" y="79" width="1" height="1"/><rect x="214" y="81" width="1" height="1"/><rect x="214" y="83" width="1" height="1"/></g><rect x="202" y="85" width="14" height="1" fill="#555"/><text x="0" y="0" transform="translate(442.9 54.2) rotate(-52)" font-size="12" fill="#505050" font-family="Liberation Sans">ab</text><path d="M445.2 55.6L454.6 46.4" stroke="#555" stroke-width="1.1"/><path d="M451.6 46.2H455V49.6" fill="none" stroke="#555" stroke-width="1"/><path d="M439 73.5h16M447.3 76.5h7.7M447.3 79.5h7.7M447.3 82.5h7.7M439 85.5h16M461.2 73.5h15.8M469.3 76.5h7.7M469.3 79.5h7.7M469.3 82.5h7.7M461.2 85.5h15.8" stroke="#666" stroke-width="1"/><path d="M439 79.5L442.6 76.4V78.3H446V80.7H442.6V82.6Z" fill="#3d7ac2"/><path d="M468.6 79.5L465 76.4V78.3H461.4V80.7H465V82.6Z" fill="#3d7ac2"/><rect x="492.5" y="41.5" width="9" height="4" fill="#fff" stroke="#666"/><rect x="492.5" y="48.5" width="9" height="7" fill="#fff" stroke="#666"/><path d="M494 43.5h12M494 50.5h6M494 52.5h6" stroke="#3d7ac2" stroke-width="1"/><path d="M506.6 46C507 48.4 505.4 49.6 502.2 49.4" fill="none" stroke="#3d7ac2" stroke-width="1.1"/><path d="M503.6 47.4L501.4 49.3L503.6 51.2" fill="none" stroke="#3d7ac2" stroke-width="1.1"/><rect x="492.5" y="72.5" width="14" height="14" fill="#fff" stroke="#666"/><path d="M492.5 75.5h14M492.5 83.5h14M499.5 72.5v3M499.5 83.5v3" stroke="#666"/><path d="M495 79.5h9" stroke="#3d7ac2" stroke-width="1"/><path d="M497 77.8L495 79.5L497 81.2M502 77.8L504 79.5L502 81.2" fill="none" stroke="#3d7ac2" stroke-width="1.1"/><rect x="604" y="73" width="14" height="7" fill="#fff" stroke="#3d7ac2" stroke-width="2"/><circle cx="610.6" cy="76.4" r="2.3" fill="#3d7ac2"/><path d="M604 73h2.2a2.2 2.2 0 0 1-2.2 2.2zM618 73h-2.2a2.2 2.2 0 0 0 2.2 2.2zM604 80h2.2a2.2 2.2 0 0 0-2.2-2.2z" fill="#3d7ac2"/><rect x="612" y="78.2" width="7" height="1.6" rx="0.8" fill="#e8b86a"/><rect x="612" y="80.4" width="7" height="1.6" rx="0.8" fill="#e8b86a"/><rect x="612" y="82.6" width="7" height="1.6" rx="0.8" fill="#e8b86a"/><rect x="607" y="83.4" width="7" height="1.6" rx="0.8" fill="#e8b86a"/><rect x="607" y="85.4" width="7" height="1.6" rx="0.8" fill="#e8b86a"/><rect x="607" y="87.2" width="7" height="1.6" rx="0.8" fill="#e8b86a"/><circle cx="667.2" cy="78.2" r="1.9" fill="#555"/><path d="M668.9 78.6C668.6 80.6 667 82.2 664.6 82.9L664.4 82.2C665.8 81.4 666.6 80.2 666.9 78.9Z" fill="#555"/><rect x="752.5" y="35.5" width="27" height="24" fill="#fff"/><path d="M752.5 35.5h27v24h-27zM759.5 35.5v24M766.5 35.5v24M773.5 35.5v24M752.5 41.5h27M752.5 47.5h27M752.5 53.5h27" fill="none" stroke="#8a8a8a"/><rect x="759.5" y="36" width="7" height="5" fill="#e05a3a"/><rect x="759.5" y="42" width="12" height="5" fill="#3d7ac2"/><rect x="759.5" y="48" width="10" height="5" fill="#e05a3a"/><rect x="759.5" y="54" width="4.5" height="5" fill="#3d7ac2"/><rect x="766.5" y="51.5" width="15" height="13" fill="#fff" stroke="#555"/><path d="M769.5 56.5h8M769.5 59.5h8M775.8 54L771.2 62" stroke="#333" stroke-width="1.1"/><rect x="811.5" y="37.5" width="24" height="20" fill="#fff"/><rect x="818" y="43" width="18" height="15" fill="#bdd7ee"/><path d="M811.5 37.5h24v20h-24zM817.5 37.5v20M823.5 37.5v20M829.5 37.5v20M811.5 42.5h24M811.5 47.5h24M811.5 52.5h24" fill="none" stroke="#999"/><path d="M840 42.6L833.6 50.6" stroke="#7a7a7a" stroke-width="3.8"/><path d="M832.8 51.4L830.2 54.8" stroke="#7a7a7a" stroke-width="3.8"/><path d="M830.6 55.2C828.2 53.8 824.6 55.4 823 58.6L818.4 64.6C823.4 64.6 828.6 62.2 831 58.8Z" fill="#3d7ac2"/><ellipse cx="827.2" cy="58.2" rx="1.6" ry="1" transform="rotate(-40 827.2 58.2)" fill="#fff"/><path d="M43 33.8L50.6 43.6M51 33.8L43.4 43.6" stroke="#666" stroke-width="1.7" fill="none"/><circle cx="42.8" cy="45.6" r="2.7" fill="none" stroke="#3d7ac2" stroke-width="1.1"/><circle cx="51.2" cy="45.6" r="2.7" fill="none" stroke="#3d7ac2" stroke-width="1.1"/><path d="M39.5 57.5H44.5L46.5 59.5V67.5H39.5Z" fill="#fff" stroke="#555" stroke-width="1"/><path d="M41 60.5h3M41 62.5h3M41 64.5h3" stroke="#3d7ac2" stroke-width="1"/><path d="M45.5 60.5H51.5L54.5 63.5V70.5H45.5Z" fill="#fff" stroke="#555" stroke-width="1"/><path d="M47 63.5h3M47 65.5h5.5M47 67.5h5.5" stroke="#3d7ac2" stroke-width="1"/><path d="M38.8 86.2L43.6 84.3L50 90.2L46 94Z" fill="#eac07a"/><path d="M44.6 83.8L47.9 81.4L53.5 86.8L50.8 89.6Z" fill="#6e6e6e"/><path d="M50.2 82.2L53.3 79.4L55.6 81.7L52.7 84.9Z" fill="#6e6e6e"/><rect x="244" y="84" width="16" height="4" fill="#ffff00"/><path d="M246.2 78.9L252 73.4L257.6 78.6L251.8 83.6Z" fill="#fff" stroke="#444" stroke-width="1"/><path d="M249.6 76.6V72.8H252.6V77.6" fill="none" stroke="#444" stroke-width="1.1"/><path d="M256.8 75.8C260.2 76.6 261.2 80 257.4 83.8C258.2 81 258.4 78.6 256.8 75.8Z" fill="#3d7ac2"/><path d="M-1 177.5H7.5L11.5 181.5V192.5H-1Z" fill="#fff" stroke="#a3a3a3"/><path d="M7.5 177.5V181.5H11.5" fill="none" stroke="#bbb"/><rect x="5" y="182" width="2" height="1" fill="#5aa56a"/><rect x="8" y="182" width="2" height="1" fill="#5aa56a"/><rect x="5" y="184" width="2" height="1" fill="#5aa56a"/><rect x="8" y="184" width="2" height="1" fill="#5aa56a"/><rect x="5" y="186" width="2" height="1" fill="#5aa56a"/><rect x="8" y="186" width="2" height="1" fill="#5aa56a"/><rect x="5" y="188" width="2" height="1" fill="#5aa56a"/><rect x="8" y="188" width="2" height="1" fill="#5aa56a"/><rect x="5" y="190" width="2" height="1" fill="#5aa56a"/><rect x="8" y="190" width="2" height="1" fill="#5aa56a"/><rect x="-6" y="180" width="9" height="11" fill="#1e7145"/><path d="M-1 182L2 189M2 182L-1 189" stroke="#fff" stroke-width="1.2"/></svg>
</body></html>
